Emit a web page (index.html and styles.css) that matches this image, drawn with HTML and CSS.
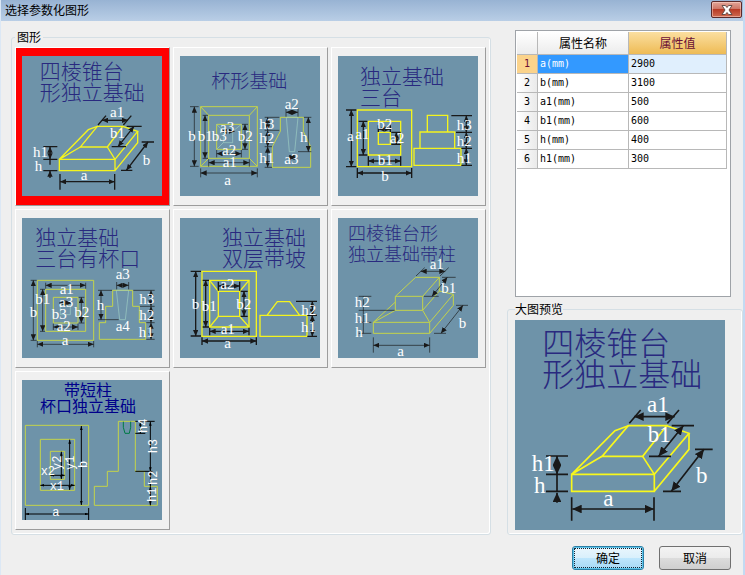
FILE: index.html
```html
<!DOCTYPE html>
<html lang="zh-CN">
<head>
<meta charset="utf-8">
<title>选择参数化图形</title>
<link rel="stylesheet" href="styles.css">
</head>
<body>
<svg class="defs" aria-hidden="true">
  <defs>
    <marker id="arrow" markerUnits="userSpaceOnUse" markerWidth="18" markerHeight="16" refX="18" refY="8" orient="auto-start-reverse"><path d="M0 0 L18 8 L0 16 Z" fill="#191919"/></marker>
    <marker id="arrow-large" markerUnits="userSpaceOnUse" markerWidth="28" markerHeight="26" refX="28" refY="13" orient="auto-start-reverse"><path d="M0 0 L28 13 L0 26 Z" fill="#191919"/></marker>
    <marker id="arrow-small" markerUnits="userSpaceOnUse" markerWidth="12" markerHeight="8" refX="12" refY="4" orient="auto-start-reverse"><path d="M0 0 L12 4 L0 8 Z" fill="#000"/></marker>
  </defs>
</svg>
<div class="dialog">
  <header class="titlebar">
    <h1 class="title">选择参数化图形</h1>
    <button class="close" type="button" aria-label="关闭">
      <svg class="close-icon" viewBox="0 0 12 10" aria-hidden="true"><path d="M1 .5H4.400L6 2.500 7.600.5H11L8 5l3 4.500H7.600L6 7.500 4.400 9.500H1L4 5Z" fill="#fff" stroke="#58443f" stroke-width=".9"/></svg>
    </button>
  </header>
  <main class="content">
    <fieldset class="group shapes">
      <legend>图形</legend>
      <div class="grid">
        <button class="tile selected" type="button">
          <svg class="drawing" viewBox="36 36 420 420">
            <g class="heading"><text x="89" y="105">四棱锥台</text><text x="89" y="168">形独立基础</text></g>
            <g class="shape bold"><path d="M262 247H338L292 309H211Z"/><path d="M148 346L235 257L262 247M148 346L211 309M292 309L315 346M338 247L383 262L315 346"/><path d="M148 346H315V380H148ZM383 262V296L315 380"/></g>
            <g class="dims bold"><path d="M264 243L288 215M340 243L364 215M350 247H395M305 308H348M395 294H432M333 379H367M150 390V437M314 390V437M100 308H142M100 346H142M100 380H142"/><path class="span" d="M276 229H354"/><path class="span" d="M372 247L324 308"/><path class="span" d="M414 294L349 379"/><path class="span" d="M150 413H314"/><path class="span" d="M120 308V346"/><path class="to" d="M120 346V362M120 402V380"/></g>
            <g class="labels"><text x="300" y="220">a1</text><text x="300" y="281">b1</text><text x="398" y="364">b</text><text x="69" y="339">h1</text><text x="74" y="382">h</text><text x="212" y="409">a</text></g>
          </svg>
        </button>
        <button class="tile" type="button">
          <svg class="drawing" viewBox="24 36 420 420">
            <g class="heading small"><text x="118" y="131">杯形基础</text></g>
            <g class="shape"><path d="M86 188H256V367H86ZM110 214H232V343H110ZM134 241H208V316H134Z"/><path d="M86 188L110 214M256 188L232 214M86 367L110 343M256 367L232 343"/><path d="M325 220H394V262L416 308V370H301V308L325 262Z"/></g>
            <g class="shape inner"><path d="M154 262H182V296H154ZM134 241L154 262M134 316L154 296M208 241L182 262M343 220H378L368 323H352Z"/></g>
            <g class="dims"><path d="M54 188H80M54 367H80M92 214H108M92 343H108M86 373V400M256 373V400M110 346V368M232 346V368M134 318V340M208 318V340M210 241H228M210 316H228M278 220H322M278 259H322M278 308H300M278 370H300M342 192V218M378 192V218M396 220H418M378 323H418"/><path class="span" d="M67 188V367"/><path class="span" d="M99 214V343"/><path class="span" d="M86 387H256"/><path class="span" d="M110 356H232"/><path class="span" d="M134 329H208"/><path class="span" d="M219 241V316"/><path class="span" d="M146 262H188"/><path class="span" d="M287 220V259"/><path class="span" d="M287 259V308"/><path class="span" d="M287 308V370"/><path class="span" d="M342 205H378"/><path class="span" d="M409 220V323"/><path class="span" d="M350 340H370"/></g>
            <g class="labels"><text x="49" y="291">b</text><text x="77" y="291">b1</text><text x="119" y="291">b3</text><text x="197" y="291">b2</text><text x="144" y="263">a3</text><text x="150" y="332">a2</text><text x="152" y="369">a1</text><text x="157" y="423">a</text><text x="262" y="255">h3</text><text x="262" y="298">h2</text><text x="262" y="357">h1</text><text x="338" y="196">a2</text><text x="384" y="294">h</text><text x="337" y="361">a3</text></g>
          </svg>
        </button>
        <button class="tile" type="button">
          <svg class="drawing" viewBox="30 36 420 420">
            <g class="heading"><text x="96" y="119">独立基础</text><text x="96" y="183">三台</text></g>
            <g class="shape bold"><path d="M88 198H251V368H88ZM121 232H218V333H121ZM151 265H187V301H151Z"/><path d="M298 214H359V264H298ZM276 264H380V313H276ZM258 313H399V364H258Z"/></g>
            <g class="dims bold"><path d="M54 198H85M54 368H85M92 232H118M92 333H118M88 372V402M251 372V402M121 337V365M218 337V365M190 265H218M190 301H218M151 244V264M187 244V264M370 215H432M384 265H432M400 313H432M400 364H432"/><path class="span" d="M70 198V368"/><path class="span" d="M106 232V333"/><path class="span" d="M88 387H251"/><path class="span" d="M121 351H218"/><path class="span" d="M151 255H187"/><path class="span" d="M205 265V301"/><path class="span" d="M415 215V265"/><path class="span" d="M415 265V313"/><path class="span" d="M415 313V364"/></g>
            <g class="labels"><text x="57" y="291">a</text><text x="82" y="286">a1</text><text x="148" y="256">b2</text><text x="186" y="297">a2</text><text x="149" y="363">b1</text><text x="160" y="411">b</text><text x="386" y="258">h3</text><text x="386" y="306">h2</text><text x="386" y="358">h1</text></g>
          </svg>
        </button>
        <button class="tile" type="button">
          <svg class="drawing" viewBox="36 36 420 420">
            <g class="heading"><text x="76" y="118">独立基础</text><text x="76" y="181">三台有杯口</text></g>
            <g class="shape"><path d="M82 223H251V403H82ZM107 250H227V376H107ZM130 274H204V351H130Z"/><path d="M308 253H368V301H388V350H407V400H268V350H287V301H308Z"/></g>
            <g class="shape inner"><path d="M151 298H181V326H151ZM319 253H356L346 341H329Z"/></g>
            <g class="dims"><path d="M62 223H80M62 403H80M90 250H105M90 376H105M82 405V424M251 405V424M107 230V248M227 230V248M130 353V372M204 353V372M206 274H223M206 351H223M264 253H306M264 341H326M320 228V250M356 228V250M370 253H434M390 301H434M409 350H434M409 400H434"/><path class="span" d="M70 223V403"/><path class="span" d="M98 250V376"/><path class="span" d="M82 415H251"/><path class="span" d="M107 238H227"/><path class="span" d="M130 363H204"/><path class="span" d="M214 274V351"/><path class="span" d="M147 291H184"/><path class="span" d="M273 253V341"/><path class="span" d="M320 238H356"/><path class="span" d="M423 253V301"/><path class="span" d="M423 301V350"/><path class="span" d="M423 350V400"/></g>
            <g class="labels"><text x="59" y="334">b</text><text x="76" y="295">b1</text><text x="149" y="263">a1</text><text x="147" y="304">a3</text><text x="125" y="339">b3</text><text x="193" y="333">b2</text><text x="140" y="375">a2</text><text x="155" y="418">a</text><text x="260" y="313">h</text><text x="317" y="220">a3</text><text x="317" y="374">a4</text><text x="388" y="294">h3</text><text x="388" y="342">h2</text><text x="386" y="392">h1</text></g>
          </svg>
        </button>
        <button class="tile" type="button">
          <svg class="drawing" viewBox="24 36 420 420">
            <g class="heading"><text x="150" y="118">独立基础</text><text x="150" y="181">双层带坡</text></g>
            <g class="shape bold"><path d="M90 196H253V391H90ZM113 223H231V363H113ZM139 256H203V331H139Z"/><path d="M113 223L139 256M231 223L203 256M113 363L139 331M231 363L203 331M264 328H405V391H264ZM285 328L316 287H353L383 328"/></g>
            <g class="dims bold"><path d="M56 196H87M56 390H87M92 223H111M92 363H111M90 394V417M253 394V417M113 365V388M231 365V388M139 227V254M203 227V254M206 256H227M206 331H227M372 286H435M406 328H435M406 391H435"/><path class="span" d="M71 196V390"/><path class="span" d="M101 223V363"/><path class="span" d="M90 405H253"/><path class="span" d="M113 376H231"/><path class="span" d="M139 240H203"/><path class="span" d="M216 256V331"/><path class="span" d="M421 286V328"/><path class="span" d="M421 328V391"/></g>
            <g class="labels"><text x="59" y="308">b</text><text x="89" y="315">b1</text><text x="145" y="249">a2</text><text x="193" y="310">b2</text><text x="146" y="384">a1</text><text x="157" y="425">a</text><text x="388" y="326">h2</text><text x="387" y="377">h1</text></g>
          </svg>
        </button>
        <button class="tile" type="button">
          <svg class="drawing" viewBox="30 36 420 420">
            <g class="heading compact"><text x="60" y="102">四棱锥台形</text><text x="60" y="165">独立基础带柱</text></g>
            <g class="shape"><path d="M202 271L263 214H334L284 271ZM202 271V313H284V271M334 214V255L284 313"/><path d="M136 349L202 288M136 349L202 313M284 313L305 349M334 255L376 265L305 349M136 349H305V382H136ZM376 265V298L305 382"/></g>
            <g class="dims"><path d="M264 210L290 185M336 210L362 185M342 214H383M288 271H332M384 298H420M318 382H354M136 394V440M305 394V440M92 271H130M92 313H200M92 349H130M92 382H130M106 271V382"/><path class="span" d="M278 196H352"/><path class="span" d="M358 214L312 271"/><path class="span" d="M405 298L339 382"/><path class="span" d="M136 418H305"/></g>
            <g class="labels"><text x="305" y="188">a1</text><text x="340" y="262">b1</text><text x="392" y="367">b</text><text x="80" y="304">h2</text><text x="80" y="350">h1</text><text x="82" y="392">h</text><text x="208" y="450">a</text></g>
          </svg>
        </button>
        <button class="tile" type="button">
          <svg class="drawing" viewBox="36 42 420 420">
            <g class="heading plain"><text x="162" y="90">带短柱</text><text x="90" y="138">杯口独立基础</text></g>
            <g class="shape"><path d="M46 178H236V418H46ZM91 220H194V373H91ZM121 256H164V340H121Z"/><path d="M325 166H376V316H403V361H442V418H253V361H292V316H325Z"/></g>
            <path class="cup" d="M340 167V184L345 202H358L362 184V167"/>
            <g class="dims fine"><path d="M46 426V462M236 426V462M376 166H434M376 202H406M376 316H427"/><path class="span" d="M46 444H236"/><path class="span" d="M214 180V417"/><path class="span" d="M179 221V372"/><path class="span" d="M154 257V339"/><path class="span" d="M91 358H194"/><path class="span" d="M121 328H164"/><path class="span" d="M391 167V202"/><path class="span" d="M421 167V316"/><path class="span" d="M421 316V361"/><path class="span" d="M421 361V418"/></g>
            <g class="labels mono"><text x="127" y="449">a</text><text x="119" y="373">x1</text><text x="92" y="327">x2</text><text transform="translate(154 312) rotate(-90)">y2</text><text transform="translate(192 312) rotate(-90)">y1</text><text transform="translate(230 306) rotate(-90)">b</text><text transform="translate(410 201) rotate(-90)">h4</text><text transform="translate(441 262) rotate(-90)">h3</text><text transform="translate(441 357) rotate(-90)">h2</text><text transform="translate(439 408) rotate(-90)">h1</text></g>
          </svg>
        </button>
      </div>
    </fieldset>
    <div class="side">
      <div class="properties">
        <table>
          <colgroup><col class="col-number"><col class="col-name"><col class="col-value"></colgroup>
          <thead><tr><th></th><th scope="col">属性名称</th><th scope="col" class="active">属性值</th></tr></thead>
          <tbody>
            <tr class="current"><th scope="row">1</th><td>a(mm)</td><td>2900</td></tr>
            <tr><th scope="row">2</th><td>b(mm)</td><td>3100</td></tr>
            <tr><th scope="row">3</th><td>a1(mm)</td><td>500</td></tr>
            <tr><th scope="row">4</th><td>b1(mm)</td><td>600</td></tr>
            <tr><th scope="row">5</th><td>h(mm)</td><td>400</td></tr>
            <tr><th scope="row">6</th><td>h1(mm)</td><td>300</td></tr>
          </tbody>
        </table>
      </div>
      <fieldset class="group preview">
        <legend>大图预览</legend>
        <svg class="drawing large" viewBox="45 90 630 630">
          <g class="heading"><text x="127" y="195">四棱锥台</text><text x="127" y="289">形独立基础</text></g>
          <g class="shape"><path d="M385 407H500L428 499H306Z"/><path d="M215 553L345 422L385 407M215 553L306 499M428 499L463 553M500 407L567 430L463 553"/><path d="M215 553H463V604H215ZM567 430V478L463 604"/></g>
          <g class="dims"><path d="M388 400L422 360M502 400L537 360M515 407H582M447 499H513M585 478H638M489 604H543M215 622V692M462 622V692M138 498H204M138 553H204M138 604H204"/><path class="span" d="M403 380H524"/><path class="span" d="M550 407L476 499"/><path class="span" d="M612 478L514 604"/><path class="span" d="M217 657H462"/><path class="span" d="M171 498V553"/><path class="to" d="M171 553V604M171 638V608"/></g>
          <g class="labels"><text x="441" y="366">a1</text><text x="443" y="457">b1</text><text x="588" y="580">b</text><text x="95" y="544">h1</text><text x="102" y="608">h</text><text x="310" y="648">a</text></g>
        </svg>
      </fieldset>
    </div>
  </main>
  <footer class="actions">
    <button class="button default" type="button">确定</button>
    <button class="button" type="button">取消</button>
  </footer>
</div>
</body>
</html>
```
FILE: styles.css
```css
* {
  box-sizing: border-box;
}

body {
  margin: 0;
  background: #efefef;
  color: #000;
  font: 12px/16px "Noto Sans CJK SC", sans-serif;
}

button {
  margin: 0;
  font: inherit;
  color: inherit;
}

.defs {
  position: absolute;
  width: 0;
  height: 0;
}

.dialog {
  display: flex;
  flex-direction: column;
  min-height: 100vh;
  border-left: 1px solid #dce8f5;
  border-right: 2px solid #c3daf2;
}

.titlebar {
  display: flex;
  align-items: flex-start;
  justify-content: space-between;
  height: 21px;
  padding: 1px 1px 0 4px;
  background: linear-gradient(#98b3d3, #b9cee6);
}

.title {
  margin: 0;
  font-size: 12px;
  font-weight: 400;
  line-height: 17px;
}

.close {
  display: flex;
  align-items: center;
  justify-content: center;
  width: 31px;
  height: 17px;
  padding: 0;
  border: 1px solid #5b2a2a;
  border-radius: 2px;
  background: linear-gradient(#e2a598, #cf7767 45%, #b83b26 50%, #cf6a50);
  box-shadow: inset 0 0 0 1px rgba(255, 220, 210, 0.5);
}

.close-icon {
  width: 12px;
  height: 10px;
}

.content {
  display: grid;
  grid-template-columns: minmax(0, 480fr) minmax(0, 236fr);
  gap: 16px;
  padding: 8px 0 0 10px;
}

.group {
  min-width: 0;
  margin: 0;
  border: 1px solid #d5dfe5;
  border-radius: 3px;
  box-shadow: inset -1px -1px 0 #fff;
}

.group legend {
  padding: 0 2px;
  line-height: 16px;
}

.shapes {
  padding: 2px 4px 4px 3px;
}

.grid {
  display: grid;
  grid-template-columns: repeat(3, minmax(0, 1fr));
  gap: 3px;
}

.tile {
  display: block;
  padding: 8px 7px 9px 6px;
  border: 1px solid;
  border-color: #fff #9c9c9c #9c9c9c #fff;
  background: #f0f0f0;
}

.tile.selected {
  background: #f00;
}

.drawing {
  display: block;
  width: 100%;
  background: #6e93a9;
}

.heading {
  fill: #29297f;
  font-size: 63px;
  font-weight: 300;
}

.heading.small {
  font-size: 57px;
}

.heading.compact {
  font-size: 54px;
}

.heading.plain {
  fill: #00008b;
  font-size: 48px;
  font-weight: 400;
}

.large .heading {
  font-size: 96px;
}

.shape {
  fill: none;
  stroke: #c4d34a;
  stroke-width: 3;
}

.shape.bold {
  stroke: #f4f41e;
  stroke-width: 4;
}

.shape.inner {
  stroke: #9fcfc4;
  stroke-width: 2;
}

.cup {
  fill: none;
  stroke: #007a45;
  stroke-width: 3;
}

.large .shape {
  stroke: #f8f81c;
  stroke-width: 5;
}

.dims {
  fill: none;
  stroke: #191919;
  stroke-width: 2;
}

.dims.bold {
  stroke-width: 4;
}

.large .dims {
  stroke-width: 5;
}

.span {
  marker-start: url(#arrow);
  marker-end: url(#arrow);
}

.to {
  marker-end: url(#arrow);
}

.large .span {
  marker-start: url(#arrow-large);
  marker-end: url(#arrow-large);
}

.large .to {
  marker-end: url(#arrow-large);
}

.dims.fine {
  stroke: #000;
  stroke-width: 3;
}

.fine .span {
  marker-start: url(#arrow-small);
  marker-end: url(#arrow-small);
}

.labels {
  fill: #fff;
  font-family: "Liberation Serif", serif;
  font-size: 45px;
}

.labels.mono {
  font-family: "Liberation Mono", monospace;
  font-size: 36px;
}

.large .labels {
  font-size: 69px;
}

.side {
  display: flex;
  flex-direction: column;
  gap: 4px;
  min-width: 0;
}

.properties {
  flex: 1;
  margin: 1px 12px 0 8px;
  padding: 1px 3px 1px 1px;
  border: 1px solid #9fa3a8;
  background: #fff;
}

.properties table {
  width: 100%;
  border-spacing: 0;
  table-layout: fixed;
}

.col-number {
  width: 21px;
}

.col-name {
  width: 91px;
}

.properties th,
.properties td {
  height: 19px;
  padding: 0 2px;
  border-right: 1px solid #b8b8b8;
  border-bottom: 1px solid #b8b8b8;
  line-height: 18px;
  font-weight: 400;
}

.properties td,
.properties tbody th {
  font-family: "DejaVu Sans Mono", monospace;
  font-size: 10px;
}

.properties th {
  background: linear-gradient(90deg, #fff, #eaeaea);
}

.properties thead th {
  height: 23px;
  background: linear-gradient(#fff, #ececec);
}

.properties thead .active {
  background: linear-gradient(#fbdfa0, #eebb55);
  color: #6a0f35;
}

.properties .current th {
  background: #fbd38b;
  color: #6a0f35;
}

.properties .current td {
  background: #e0effd;
}

.properties .current th + td {
  background: #3399ff;
  color: #fff;
}

.preview {
  padding: 3px 17px 4px 7px;
}

.preview legend {
  padding: 0;
}

.actions {
  display: flex;
  justify-content: flex-end;
  gap: 15px;
  padding: 11px 12px 5px;
}

.button {
  width: 72px;
  height: 24px;
  padding: 0;
  border: 1px solid #707070;
  border-radius: 3px;
  background: linear-gradient(#f3f3f3, #ebebeb 49%, #dcdcdc 51%, #cfcfcf);
  line-height: 20px;
}

.button.default {
  border-color: #2c7fa6;
  background: linear-gradient(#eaf6fd, #d9f0fc 49%, #bee6fd 51%, #a7d9f5);
  box-shadow: inset 0 0 0 1px #5cc4ea;
  outline: 1px dotted #123;
  outline-offset: -3px;
}
```
